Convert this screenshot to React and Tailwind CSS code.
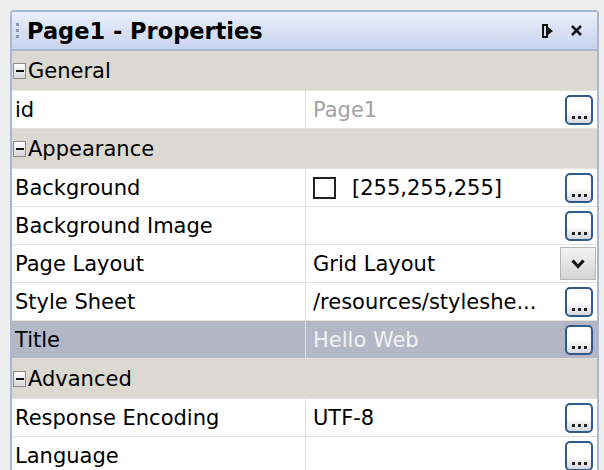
import React from 'react';

const font = { fontFamily: '"DejaVu Sans", Tahoma, sans-serif' };

const DotsButton = () => (
  <div className="w-[28px] h-[30px] shrink-0 rounded-[5px] border-2 border-[#2f5b8c] bg-gradient-to-b from-white via-white to-[#d6d6de] flex items-end justify-center pb-[4px] gap-[3px]">
    <span className="w-[3px] h-[3px] bg-[#222]"></span>
    <span className="w-[3px] h-[3px] bg-[#222]"></span>
    <span className="w-[3px] h-[3px] bg-[#222]"></span>
  </div>
);

const DropButton = () => (
  <div className="w-[36px] h-[33px] shrink-0 -mr-[3px] border border-[#b8b8b8] bg-gradient-to-b from-[#f4f4f4] to-[#d4d4d4] flex items-center justify-center">
    <svg width="14" height="10" viewBox="0 0 14 10">
      <path d="M1.5 1.5 L7 7.5 L12.5 1.5" fill="none" stroke="#111" strokeWidth="3.2" />
    </svg>
  </div>
);

const Category = ({ label }) => (
  <div className="h-[40px] bg-[#dbd9d1] flex items-center pl-[1px] border-b border-[#e6e4de]">
    <div className="w-[13px] h-[16px] shrink-0 border border-[#8c8c8c] bg-gradient-to-b from-white to-[#d8d8d8] flex items-center justify-center mr-[2px]">
      <span className="w-[8px] h-[2px] bg-[#111]"></span>
    </div>
    <span className="text-[21px] text-black leading-[26px]">{label}</span>
  </div>
);

const Row = ({ name, value, selected, muted, swatch, drop, noButton }) => (
  <div className={`h-[38px] flex border-b border-[#e2e0d9] ${selected ? 'bg-[#b4b7c5]' : 'bg-white'}`}>
    <div className="w-[294px] shrink-0 border-r border-[#e2e0d9] flex items-center pl-[3px] text-[21px] text-black leading-[26px]">
      {name}
    </div>
    <div className="flex-1 flex items-center pl-[7px] pr-[4px] min-w-0">
      <div className={`flex-1 flex items-center text-[21px] leading-[26px] whitespace-nowrap ${selected ? 'text-[#f2f2f6]' : muted ? 'text-[#a3a3a3]' : 'text-black'}`}>
        {swatch && <span className="w-[23px] h-[22px] border-2 border-[#222] bg-white mr-[16px] shrink-0"></span>}
        {value}
      </div>
      {drop ? <DropButton /> : noButton ? null : <DotsButton />}
    </div>
  </div>
);

export default function App() {
  return (
    <div className="w-[604px] h-[470px] bg-[#efefef] pt-[10px] pl-[10px] pr-[5px] overflow-hidden" style={font}>
      <div className="border-l-2 border-t-2 border-r-2 border-[#a8b7d2] rounded-tl-[4px] rounded-tr-[4px] bg-white">
        <div className="h-[39px] bg-gradient-to-b from-[#eaeffa] to-[#c8d4ee] border-b-2 border-[#a7b6d3] flex items-center pl-[4px] pr-[14px]">
          <div className="flex flex-col gap-[3px] mr-[8px]">
            <span className="w-[3px] h-[3px] bg-[#8c97ad]"></span>
            <span className="w-[3px] h-[3px] bg-[#8c97ad]"></span>
            <span className="w-[3px] h-[3px] bg-[#8c97ad]"></span>
          </div>
          <span className="text-[22.5px] font-bold text-black leading-[28px]">Page1 - Properties</span>
          <div className="ml-auto flex items-center gap-[16px]">
            <svg width="12" height="14" viewBox="0 0 12 14">
              <rect x="1" y="1" width="4" height="12" fill="none" stroke="#111" strokeWidth="2" />
              <path d="M6 3 L11 7 L6 11 Z" fill="#111" />
            </svg>
            <svg width="13" height="13" viewBox="0 0 13 13">
              <path d="M2 2 L11 11 M11 2 L2 11" stroke="#111" strokeWidth="2.5" />
            </svg>
          </div>
        </div>
        <Category label="General" />
        <Row name="id" value="Page1" muted />
        <Category label="Appearance" />
        <Row name="Background" value="[255,255,255]" swatch />
        <Row name="Background Image" value="" />
        <Row name="Page Layout" value="Grid Layout" drop />
        <Row name="Style Sheet" value="/resources/styleshe..." />
        <Row name="Title" value="Hello Web" selected />
        <Category label="Advanced" />
        <Row name="Response Encoding" value="UTF-8" />
        <Row name="Language" value="" />
      </div>
    </div>
  );
}
